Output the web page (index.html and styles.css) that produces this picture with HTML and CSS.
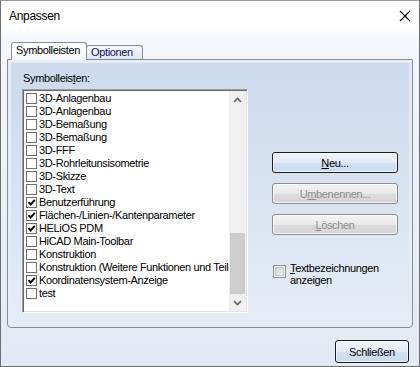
FILE: index.html
```html
<!DOCTYPE html>
<html lang="de">
<head>
    <meta charset="UTF-8">
    <title>Anpassen</title>
    <link rel="stylesheet" href="styles.css">
</head>
<body>
    <div class="window">
        <div class="titlebar">
            <span class="title">Anpassen</span>
            <svg class="close-x" width="12" height="12" viewBox="0 0 12 12">
                <path d="M1 1 L11 11 M11 1 L1 11" stroke="#000" stroke-width="1.1" fill="none"/>
            </svg>
        </div>

        <div class="content">
            <div class="tabs">
                <div class="tab active">Symbolleisten</div>
                <div class="tab">Optionen</div>
            </div>

            <div class="panel">
                <div class="panel-inner">
                    <div class="left">
                        <div class="label">Symbolleis<u>t</u>en:</div>
                        <div class="listbox">
                            <ul class="items">
                                <li><span class="cb"></span>3D-Anlagenbau</li>
                                <li><span class="cb"></span>3D-Anlagenbau</li>
                                <li><span class="cb"></span>3D-Bemaßung</li>
                                <li><span class="cb"></span>3D-Bemaßung</li>
                                <li><span class="cb"></span>3D-FFF</li>
                                <li><span class="cb"></span>3D-Rohrleitunsisometrie</li>
                                <li><span class="cb"></span>3D-Skizze</li>
                                <li><span class="cb"></span>3D-Text</li>
                                <li><span class="cb checked"><svg viewBox="0 0 9 9"><path d="M1.5 4.2 L3.6 6.5 L7.8 1.8" stroke="#000" stroke-width="1.9" fill="none"/></svg></span>Benutzerführung</li>
                                <li><span class="cb checked"><svg viewBox="0 0 9 9"><path d="M1.5 4.2 L3.6 6.5 L7.8 1.8" stroke="#000" stroke-width="1.9" fill="none"/></svg></span>Flächen-/Linien-/Kantenparameter</li>
                                <li><span class="cb checked"><svg viewBox="0 0 9 9"><path d="M1.5 4.2 L3.6 6.5 L7.8 1.8" stroke="#000" stroke-width="1.9" fill="none"/></svg></span>HELiOS PDM</li>
                                <li><span class="cb"></span>HiCAD Main-Toolbar</li>
                                <li><span class="cb"></span>Konstruktion</li>
                                <li><span class="cb"></span>Konstruktion (Weitere Funktionen und Teile)</li>
                                <li><span class="cb checked"><svg viewBox="0 0 9 9"><path d="M1.5 4.2 L3.6 6.5 L7.8 1.8" stroke="#000" stroke-width="1.9" fill="none"/></svg></span>Koordinatensystem-Anzeige</li>
                                <li><span class="cb"></span>test</li>
                            </ul>
                            <div class="scrollbar">
                                <div class="arrow">
                                    <svg width="9" height="6" viewBox="0 0 9 6"><path d="M1 5 L4.5 1.5 L8 5" stroke="#606060" stroke-width="1.6" fill="none"/></svg>
                                </div>
                                <div class="track"><div class="thumb"></div></div>
                                <div class="arrow">
                                    <svg width="9" height="6" viewBox="0 0 9 6"><path d="M1 1 L4.5 4.5 L8 1" stroke="#606060" stroke-width="1.6" fill="none"/></svg>
                                </div>
                            </div>
                        </div>
                    </div>

                    <div class="right">
                        <button class="btn default"><u>N</u>eu...</button>
                        <button class="btn" disabled>U<u>m</u>benennen...</button>
                        <button class="btn" disabled><u>L</u>öschen</button>
                        <div class="option">
                            <span class="cb3d"></span>
                            <span><u>T</u>extbezeichnungen<br>anzeigen</span>
                        </div>
                    </div>
                </div>
            </div>

            <div class="footer">
                <button class="btn default close-btn">Schließen</button>
            </div>
        </div>
    </div>
</body>
</html>
```

FILE: styles.css
```css
body {
    margin: 0;
    font-family: "Liberation Sans", Arial, sans-serif;
    font-size: 11px;
    letter-spacing: -0.35px;
    color: #000;
}
.window {
    width: 420px;
    height: 367px;
    box-sizing: border-box;
    border: 1px solid #6e6e6e;
    border-top-color: #9a9a9a;
    background: linear-gradient(#ffffff 0, #ffffff 28px, #f4f7fc 36px, #e2e9f5 100%);
}
.titlebar {
    height: 30px;
    display: flex;
    align-items: center;
    justify-content: space-between;
    padding: 0 8px 0 8px;
}
.title {
    font-size: 12px;
    letter-spacing: -0.3px;
}
.close-x {
    margin-top: -1px;
}
.content {
    padding: 11px 6px 0 6px;
}
.tabs {
    display: flex;
    align-items: flex-end;
    height: 17px;
    padding-left: 4px;
}
.tab {
    box-sizing: border-box;
    height: 14px;
    border: 1px solid #898c95;
    border-bottom: none;
    border-radius: 3px 3px 0 0;
    background: linear-gradient(#f6f8fc, #dfe7f3);
    color: #10106a;
    padding: 0 0 0 4px;
    width: 57px;
    line-height: 12px;
    margin-left: -1px;
}
.tab.active {
    position: relative;
    z-index: 1;
    height: 18px;
    margin-bottom: -1px;
    width: 76px;
    margin-left: 0;
    background: linear-gradient(#ffffff, #f5f8fc);
    color: #000;
    line-height: 15px;
}
.panel {
    box-sizing: border-box;
    height: 269px;
    border: 1px solid #898c95;
    border-radius: 0 0 4px 4px;
    padding: 3px;
    background: #e6ecf6;
}
.panel-inner {
    height: 100%;
    display: flex;
    background: linear-gradient(#ccdaed, #dbe5f2 60%, #e6ecf7);
}
.left {
    margin-left: 11px;
    padding-top: 9px;
}
.label {
    line-height: 13px;
    padding-left: 1px;
    margin-bottom: 4px;
}
.listbox {
    box-sizing: border-box;
    width: 226px;
    height: 224px;
    display: flex;
    background: #fff;
    border: 1px solid;
    border-color: #a0a0a0 #ffffff #ffffff #a0a0a0;
    box-shadow: inset 1px 1px 0 #696969, inset -1px -1px 0 #e3e3e3;
    padding: 1px;
    overflow: hidden;
}
.items {
    list-style: none;
    margin: 0;
    padding: 1px 0 0 2px;
    flex: 1;
    overflow: hidden;
}
.items li {
    height: 13px;
    line-height: 13px;
    display: flex;
    align-items: center;
    white-space: nowrap;
}
.cb {
    flex: none;
    box-sizing: border-box;
    width: 11px;
    height: 11px;
    border: 1px solid #707070;
    background: #fff;
    margin-right: 2px;
    display: flex;
}
.cb svg {
    width: 9px;
    height: 9px;
}
.scrollbar {
    flex: none;
    width: 17px;
    display: flex;
    flex-direction: column;
    background: #f0f0f0;
}
.arrow {
    height: 17px;
    display: flex;
    align-items: center;
    justify-content: center;
}
.track {
    flex: 1;
    display: flex;
    flex-direction: column;
    justify-content: flex-end;
}
.thumb {
    height: 61px;
    margin: 0 1px;
    background: #cdcdcd;
}
.right {
    margin-left: 24px;
    padding-top: 89px;
    display: flex;
    flex-direction: column;
}
.btn {
    box-sizing: border-box;
    width: 126px;
    height: 21px;
    margin: 0 0 10px 0;
    padding: 0;
    font-family: "Liberation Sans", Arial, sans-serif;
    font-size: 11px;
    letter-spacing: -0.35px;
    color: #000;
    border: 1px solid #7b7b7b;
    border-radius: 3px;
    background: linear-gradient(#f2f2f2, #ebebeb 50%, #dddddd 51%, #d2d2d2);
    box-shadow: inset 0 0 0 1px rgba(255, 255, 255, 0.7);
}
.btn.default {
    border-color: #1c1c1c;
    background: linear-gradient(#f1f6fc, #e0eaf7 50%, #d2e1f3 51%, #c9dbf0);
}
.btn:disabled {
    color: #8b8b8b;
    border-color: #8d8d8d;
    background: linear-gradient(#f4f4f4, #e9e9e9 50%, #dcdcdc 51%, #d4d4d4);
}
.option {
    margin-top: 17px;
    display: flex;
    align-items: flex-start;
    line-height: 12px;
}
.cb3d {
    flex: none;
    box-sizing: border-box;
    width: 13px;
    height: 13px;
    margin: 3px 4px 0 1px;
    border: 1px solid #8e8f8f;
    background: linear-gradient(135deg, #cfcfcf, #f4f4f4);
    box-shadow: inset 0 0 0 1px #f4f4f4, inset 0 0 0 2px #c4c4c4;
}
.footer {
    display: flex;
    justify-content: flex-end;
    padding: 12px 4px 0 0;
}
.close-btn {
    width: 74px;
    height: 23px;
    margin: 0;
}
```
